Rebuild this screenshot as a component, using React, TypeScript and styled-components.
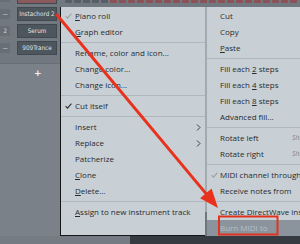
import React from "react";
import styled, { createGlobalStyle } from "styled-components";

const GlobalStyle = createGlobalStyle`
  html, body { margin: 0; padding: 0; background: #353b41; overflow: hidden; }
`;

type Channel = { name: string; route: string; tint?: string };

const channels: Channel[] = [
  { name: "", route: "", tint: "#8a5a5d" },
  { name: "Instachord 2", route: "---" },
  { name: "Serum", route: "2" },
  { name: "909Trance", route: "---" },
];

type Item =
  | { kind: "sep" }
  | { kind: "item"; label: React.ReactNode; check?: "dark" | "light"; sub?: boolean; hint?: string; disabled?: boolean };

const U = styled.span`
  text-decoration: underline;
  text-underline-offset: 1px;
  text-decoration-thickness: 1px;
`;

const leftItems: Item[] = [
  { kind: "item", label: <><U>P</U>iano roll</>, check: "light" },
  { kind: "item", label: <><U>G</U>raph editor</> },
  { kind: "sep" },
  { kind: "item", label: "Rename, color and icon..." },
  { kind: "item", label: "Change color..." },
  { kind: "item", label: "Change icon..." },
  { kind: "sep" },
  { kind: "item", label: "Cut itself", check: "dark" },
  { kind: "sep" },
  { kind: "item", label: "Insert", sub: true },
  { kind: "item", label: "Replace", sub: true },
  { kind: "item", label: "Patcherize" },
  { kind: "item", label: <><U>C</U>lone</> },
  { kind: "item", label: <><U>D</U>elete...</> },
  { kind: "sep" },
  { kind: "item", label: <><U>A</U>ssign to new instrument track</> },
];

const rightItems: Item[] = [
  { kind: "item", label: "Cut" },
  { kind: "item", label: "Copy" },
  { kind: "item", label: <><U>P</U>aste</> },
  { kind: "sep" },
  { kind: "item", label: <>Fill each <U>2</U> steps</> },
  { kind: "item", label: <>Fill each <U>4</U> steps</> },
  { kind: "item", label: <>Fill each <U>8</U> steps</> },
  { kind: "item", label: "Advanced fill..." },
  { kind: "sep" },
  { kind: "item", label: "Rotate left", hint: "Shift+Left" },
  { kind: "item", label: "Rotate right", hint: "Shift+Right" },
  { kind: "sep" },
  { kind: "item", label: "MIDI channel through", check: "light" },
  { kind: "item", label: "Receive notes from" },
  { kind: "sep" },
  { kind: "item", label: "Create DirectWave instrument" },
  { kind: "item", label: "Burn MIDI to", disabled: true },
];

const Root = styled.div`
  position: relative;
  width: 300px;
  height: 244px;
  overflow: hidden;
  background: #353b41;
  font-family: "Open Sans", "Noto Sans", sans-serif;
`;

const Rack = styled.div`
  height: 236px;
  background: #7a8189;
  display: flex;
  flex-direction: column;
`;

const Rows = styled.div`
  display: flex;
  flex-direction: column;
  gap: 3px;
  margin-top: -10px;
  padding-bottom: 8px;
  background: #71787f;
`;

const Row = styled.div`
  display: flex;
  align-items: center;
  height: 14px;
`;

const RouteBox = styled.div`
  width: 10px;
  height: 10px;
  margin-right: 7px;
  background: #676e76;
  color: #d9dde0;
  font-family: "DejaVu Sans Condensed", "DejaVu Sans", sans-serif;
  font-size: 6px;
  line-height: 10px;
  text-align: center;
  letter-spacing: -0.5px;
`;

const ChannelButton = styled.div<{ $tint?: string }>`
  box-sizing: border-box;
  width: 40px;
  height: 14px;
  margin-right: 8px;
  background: ${(p) => p.$tint || "#4d555d"};
  border: 1px solid #41484f;
  color: #e1e5e8;
  font-family: "DejaVu Sans Condensed", "DejaVu Sans", sans-serif;
  font-size: 6.3px;
  line-height: 12px;
  text-align: center;
  white-space: nowrap;
  overflow: hidden;
`;

const Steps = styled.div`
  display: flex;
  gap: 2px;
`;

const Step = styled.div<{ $red: boolean }>`
  width: 7px;
  height: 12px;
  flex: none;
  border-radius: 1px;
  background: ${(p) => (p.$red ? "#8c5258" : "#575e65")};
`;

const AddRow = styled.div`
  height: 18px;
  border-top: 1px solid #686f76;
  display: flex;
  align-items: center;
  padding-left: 34px;
  color: #f1f3f4;
  font-family: "DejaVu Sans", sans-serif;
  font-weight: bold;
  font-size: 9px;
`;

const Footer = styled.div`
  height: 8px;
  display: flex;
`;

const FooterLeft = styled.div`
  width: 130px;
  background: #747b82;
`;

const Menu = styled.div`
  position: absolute;
  left: 60px;
  top: 7px;
  display: flex;
  height: 229px;
`;

const Column = styled.div<{ $width: number; $edge?: boolean }>`
  box-sizing: border-box;
  width: ${(p) => p.$width}px;
  background: #c9d0d5;
  padding-top: 1px;
  display: flex;
  flex-direction: column;
  border-left: ${(p) => (p.$edge ? "1px solid #15181b" : "none")};
  border-bottom: ${(p) => (p.$edge ? "1px solid #15181b" : "none")};
`;

const Divider = styled.div`
  width: 2px;
  background: linear-gradient(to bottom, #a3abb1 0, #a3abb1 205px, #6f777e 205px);
`;

const Entry = styled.div<{ $pad: number; $disabled?: boolean }>`
  position: relative;
  height: 16px;
  line-height: 16px;
  padding-left: ${(p) => p.$pad}px;
  font-size: 8px;
  color: ${(p) => (p.$disabled ? "#b7bec4" : "#262b30")};
  background: ${(p) => (p.$disabled ? "#8b949c" : "transparent")};
  white-space: nowrap;
`;

const Check = styled.svg<{ $tone: "dark" | "light" }>`
  position: absolute;
  left: 4px;
  top: 5px;
  stroke: ${(p) => (p.$tone === "dark" ? "#2a2f34" : "#9aa2a8")};
`;

const Chevron = styled.svg`
  position: absolute;
  right: 4px;
  top: 5px;
`;

const Hint = styled.span`
  position: absolute;
  left: 85px;
  font-style: italic;
  font-size: 7px;
  color: #7e868c;
`;

const Separator = styled.div`
  height: 5px;
  display: flex;
  align-items: center;
  &::after {
    content: "";
    flex: 1;
    height: 1px;
    background: #b0b8be;
  }
`;

const Overlay = styled.svg`
  position: absolute;
  left: 0;
  top: 0;
  pointer-events: none;
`;

function MenuList(p: { items: Item[]; pad: number }) {
  return (
    <>
      {p.items.map((it, i) =>
        it.kind === "sep" ? (
          <Separator key={i} />
        ) : (
          <Entry key={i} $pad={p.pad} $disabled={it.disabled}>
            {it.check && (
              <Check $tone={it.check} width="7" height="6" viewBox="0 0 7 6">
                <path d="M0.6 3.2 L2.5 5.2 L6.4 0.6" fill="none" strokeWidth="1.1" />
              </Check>
            )}
            {it.label}
            {it.hint && <Hint>{it.hint}</Hint>}
            {it.sub && (
              <Chevron width="5" height="7" viewBox="0 0 5 7">
                <path d="M1 0.5 L4 3.5 L1 6.5" fill="none" stroke="#3a4046" strokeWidth="1" />
              </Chevron>
            )}
          </Entry>
        )
      )}
    </>
  );
}

export default function App() {
  const tip = { x: 218, y: 208 };
  const start = { x: 57, y: 15 };
  const dx = tip.x - start.x;
  const dy = tip.y - start.y;
  const len = Math.hypot(dx, dy);
  const ux = dx / len;
  const uy = dy / len;
  const headLen = 19;
  const half = 7.5;
  const bx = tip.x - ux * headLen;
  const by = tip.y - uy * headLen;
  const head = `${tip.x},${tip.y} ${bx - uy * half},${by + ux * half} ${bx + uy * half},${by - ux * half}`;

  return (
    <Root>
      <GlobalStyle />
      <Rack>
        <Rows>
          {channels.map((c, i) => (
            <Row key={i}>
              <RouteBox>{c.route}</RouteBox>
              <ChannelButton $tint={c.tint}>{c.name}</ChannelButton>
              <Steps>
                {Array.from({ length: 26 }).map((_, s) => (
                  <Step key={s} $red={s >= 5} />
                ))}
              </Steps>
            </Row>
          ))}
        </Rows>
        <AddRow>+</AddRow>
      </Rack>
      <Footer>
        <FooterLeft />
      </Footer>

      <Menu>
        <Column $width={145} $edge>
          <MenuList items={leftItems} pad={14} />
        </Column>
        <Divider />
        <Column $width={110}>
          <MenuList items={rightItems} pad={13} />
        </Column>
      </Menu>

      <Overlay width="300" height="244" viewBox="0 0 300 244">
        <line x1={start.x} y1={start.y} x2={bx} y2={by} stroke="#e8321d" strokeWidth="3" strokeLinecap="round" />
        <polygon points={head} fill="#e8321d" />
        <rect x="219" y="216.5" width="58.5" height="18" fill="none" stroke="#e2331f" strokeWidth="2" />
      </Overlay>
    </Root>
  );
}
